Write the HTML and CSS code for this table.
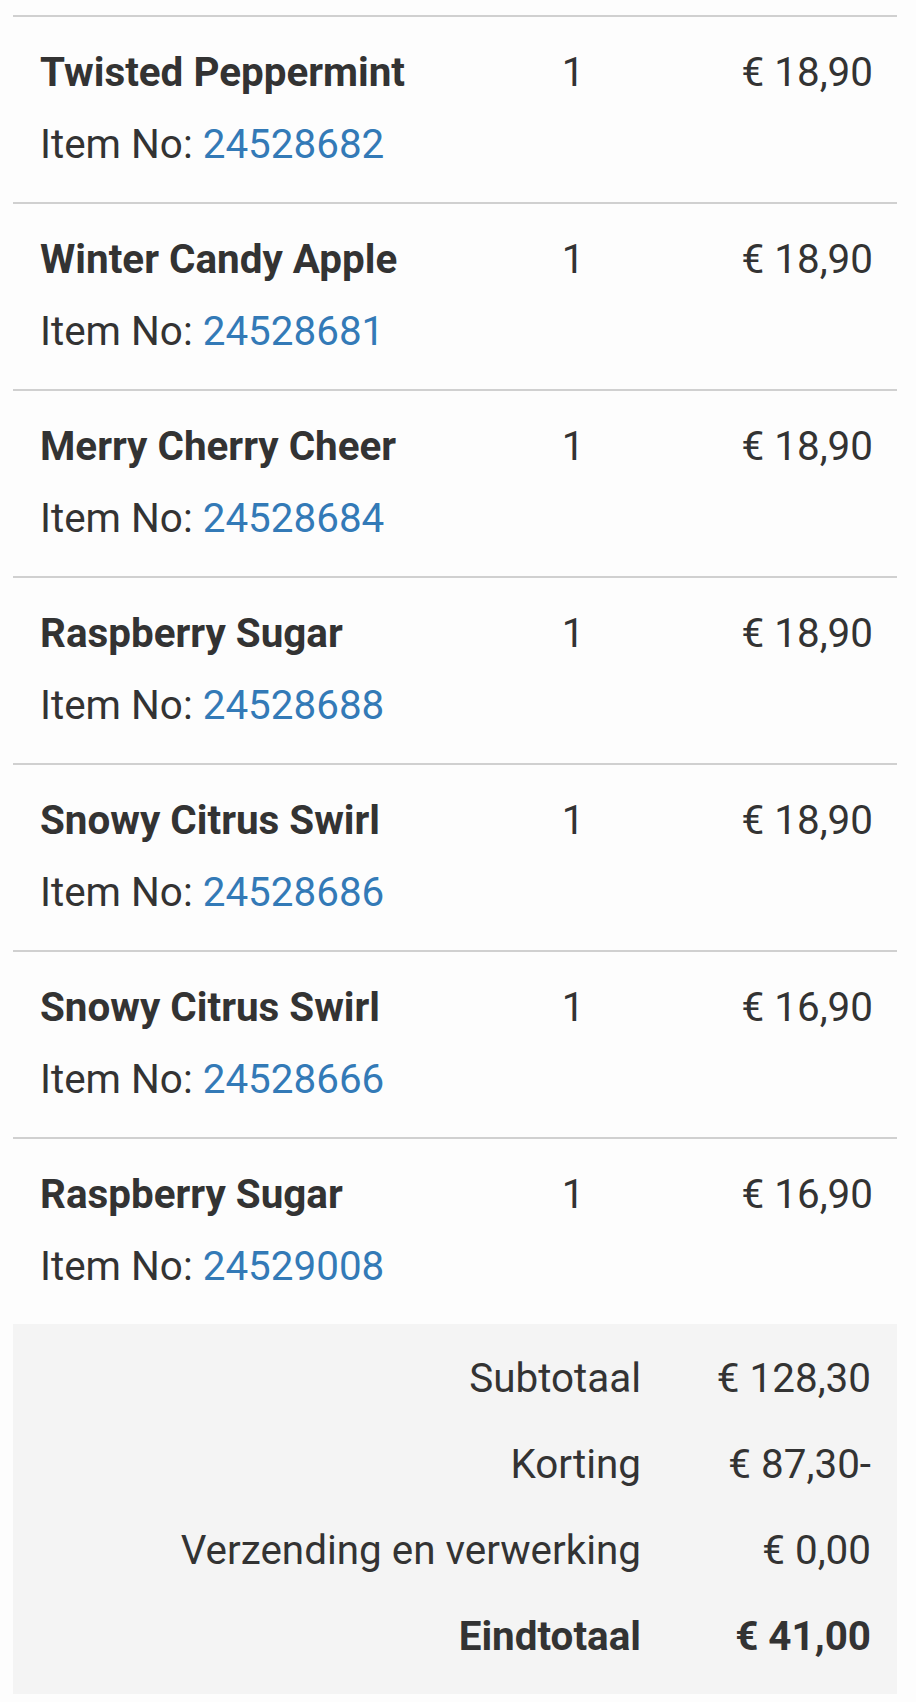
FILE: index.html
```html
<!DOCTYPE html>
<html lang="nl">
<head>
    <meta charset="UTF-8">
    <meta name="viewport" content="width=device-width, initial-scale=1.0">
    <title>Winkelwagen</title>
    <link rel="stylesheet" href="styles.css">
</head>
<body>
    <div class="cart">
        <div class="item">
            <div class="item-info">
                <div class="item-name">Twisted Peppermint</div>
                <div class="item-no">Item No: <a href="#">24528682</a></div>
            </div>
            <div class="item-qty">1</div>
            <div class="item-price">€ 18,90</div>
        </div>
        <div class="item">
            <div class="item-info">
                <div class="item-name">Winter Candy Apple</div>
                <div class="item-no">Item No: <a href="#">24528681</a></div>
            </div>
            <div class="item-qty">1</div>
            <div class="item-price">€ 18,90</div>
        </div>
        <div class="item">
            <div class="item-info">
                <div class="item-name">Merry Cherry Cheer</div>
                <div class="item-no">Item No: <a href="#">24528684</a></div>
            </div>
            <div class="item-qty">1</div>
            <div class="item-price">€ 18,90</div>
        </div>
        <div class="item">
            <div class="item-info">
                <div class="item-name">Raspberry Sugar</div>
                <div class="item-no">Item No: <a href="#">24528688</a></div>
            </div>
            <div class="item-qty">1</div>
            <div class="item-price">€ 18,90</div>
        </div>
        <div class="item">
            <div class="item-info">
                <div class="item-name">Snowy Citrus Swirl</div>
                <div class="item-no">Item No: <a href="#">24528686</a></div>
            </div>
            <div class="item-qty">1</div>
            <div class="item-price">€ 18,90</div>
        </div>
        <div class="item">
            <div class="item-info">
                <div class="item-name">Snowy Citrus Swirl</div>
                <div class="item-no">Item No: <a href="#">24528666</a></div>
            </div>
            <div class="item-qty">1</div>
            <div class="item-price">€ 16,90</div>
        </div>
        <div class="item">
            <div class="item-info">
                <div class="item-name">Raspberry Sugar</div>
                <div class="item-no">Item No: <a href="#">24529008</a></div>
            </div>
            <div class="item-qty">1</div>
            <div class="item-price">€ 16,90</div>
        </div>

        <div class="totals">
            <div class="totals-label">Subtotaal</div>
            <div class="totals-value">€ 128,30</div>

            <div class="totals-label">Korting</div>
            <div class="totals-value">€ 87,30-</div>

            <div class="totals-label">Verzending en verwerking</div>
            <div class="totals-value">€ 0,00</div>

            <div class="totals-label grand">Eindtotaal</div>
            <div class="totals-value grand">€ 41,00</div>
        </div>
    </div>
</body>
</html>
```

FILE: styles.css
```css
body {
    margin: 0;
    padding: 15px 19px 0 13px;
    background: #fdfdfd;
    color: #333;
    font-family: Roboto, "Noto Sans", sans-serif;
    font-size: 40.4px;
    line-height: 72px;
}

.cart {
    width: 884px;
}

.item {
    display: grid;
    grid-template-columns: 1fr 80px 260px;
    padding: 20px 24px 21px 27px;
    border-top: 2px solid #d0d0d0;
}

.item-name {
    font-weight: bold;
}

.item-no a {
    color: #337ab7;
    text-decoration: none;
}

.item-qty {
    text-align: center;
}

.item-price {
    text-align: right;
}

.totals {
    display: grid;
    grid-template-columns: 1fr 230px;
    padding: 12px 26px 14px 27px;
    background: #f4f4f4;
    line-height: 86px;
}

.totals-label,
.totals-value {
    text-align: right;
}

.grand {
    font-weight: bold;
}
```
